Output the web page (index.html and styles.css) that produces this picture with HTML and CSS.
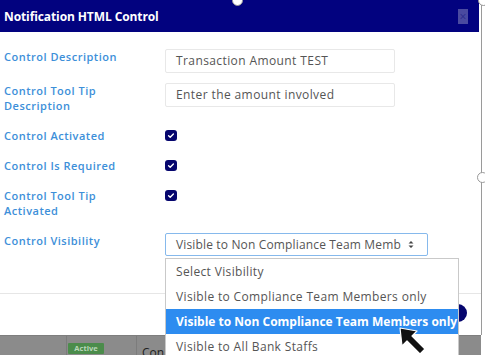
FILE: index.html
```html
<!DOCTYPE html>
<html lang="en">
<head>
  <meta charset="UTF-8">
  <title>Notification HTML Control</title>
  <link rel="stylesheet" href="styles.css">
</head>
<body>
  <div class="stage">
    <div class="modal">
      <!-- header -->
      <div class="modal-head">
        <span class="modal-title">Notification HTML Control</span>
        <span class="close">×</span>
      </div>

      <!-- form -->
      <div class="modal-body">
        <div class="row first">
          <label class="lbl">Control Description</label>
          <div class="field">Transaction Amount TEST</div>
        </div>
        <div class="row">
          <label class="lbl">Control Tool Tip<br>Description</label>
          <div class="field">Enter the amount involved</div>
        </div>
        <div class="row">
          <label class="lbl">Control Activated</label>
          <span class="check"><svg viewBox="0 0 12 11" width="12" height="11"><path d="M3.6 5.8 L5.2 7.2 L8.4 4" fill="none" stroke="#fff" stroke-width="1.4" stroke-linecap="round" stroke-linejoin="round"/></svg></span>
        </div>
        <div class="row">
          <label class="lbl">Control Is Required</label>
          <span class="check"><svg viewBox="0 0 12 11" width="12" height="11"><path d="M3.6 5.8 L5.2 7.2 L8.4 4" fill="none" stroke="#fff" stroke-width="1.4" stroke-linecap="round" stroke-linejoin="round"/></svg></span>
        </div>
        <div class="row">
          <label class="lbl">Control Tool Tip<br>Activated</label>
          <span class="check"><svg viewBox="0 0 12 11" width="12" height="11"><path d="M3.6 5.8 L5.2 7.2 L8.4 4" fill="none" stroke="#fff" stroke-width="1.4" stroke-linecap="round" stroke-linejoin="round"/></svg></span>
        </div>
        <div class="row">
          <label class="lbl">Control Visibility</label>
          <div class="select">
            <span class="select-text">Visible to Non Compliance Team Memb</span>
            <svg class="caret" viewBox="0 0 6 9" width="6" height="9"><path d="M0.5 3.5 L3 1 L5.5 3.5 Z M0.5 5.5 L3 8 L5.5 5.5 Z" fill="#444"/></svg>
          </div>
        </div>
      </div>

      <!-- footer -->
      <div class="modal-foot">
        <span class="round-btn"></span>
      </div>
    </div>

    <!-- page behind the overlay -->
    <div class="behind">
      <div class="cell c1"></div>
      <div class="cell c2"><span class="badge">Active</span></div>
      <div class="cell c3">Con</div>
    </div>

    <!-- open select list -->
    <ul class="options">
      <li>Select Visibility</li>
      <li>Visible to Compliance Team Members only</li>
      <li class="hl">Visible to Non Compliance Team Members only</li>
      <li>Visible to All Bank Staffs</li>
    </ul>

    <!-- resize handles -->
    <span class="handle h-top"></span>
    <span class="handle h-corner"></span>
    <span class="handle h-right"></span>

    <!-- mouse pointer -->
    <svg class="pointer" viewBox="0 0 32 30" width="32" height="30">
      <path d="M2 2 L4 20 L9 15 L22 28 L27 23 L14 10 L19 5 Z" fill="#111" stroke="#fff" stroke-width="1.2" stroke-linejoin="round"/>
    </svg>
  </div>
</body>
</html>
```

FILE: styles.css
```css
body { margin: 0; background: #fff; font-family: "Open Sans", "Liberation Sans", sans-serif; }
.stage { position: relative; width: 485px; height: 355px; overflow: hidden; background: #fff; }

.modal { width: 482px; height: 335px; border-right: 1px solid #9a9a9a; display: flex; flex-direction: column; box-sizing: border-box; }
.modal-head { height: 32px; width: 479px; background: #02027f; display: flex; align-items: center; justify-content: space-between; padding: 0 11px 0 4px; box-sizing: border-box; }
.modal-title { color: #fff; font-weight: 700; font-size: 12px; letter-spacing: -0.1px; }
.close { width: 10px; height: 15px; background: #4a4aa0; color: #2a2a8c; font-size: 12px; line-height: 15px; text-align: center; }

.modal-body { padding: 17px 0 0 4px; height: 262px; box-sizing: border-box; border-bottom: 1px solid #e6e6e6; }
.row { display: flex; align-items: flex-start; margin-bottom: 15px; }
.row.first { margin-bottom: 10px; }
.lbl { width: 161px; flex: none; color: #3d8fd9; font-size: 11px; font-weight: 600; line-height: 15px; letter-spacing: 0.5px; }

.field { width: 230px; height: 24px; box-sizing: border-box; border: 1px solid #e8e8e8; border-radius: 2px; padding: 0 10px; font-size: 12px; line-height: 22px; color: #555; letter-spacing: 0.4px; }
.check { width: 12px; height: 11px; margin-top: 2px; border-radius: 3px; background: #06066e; display: block; }
.check svg { display: block; }

.select { width: 263px; height: 23px; box-sizing: border-box; border: 1px solid #86b9ec; border-radius: 2px; padding: 0 10px; display: flex; align-items: center; gap: 7px; }
.select-text { font-size: 12px; color: #555; white-space: nowrap; letter-spacing: 0.15px; }
.caret { display: block; }

.modal-foot { flex: 1; display: flex; justify-content: flex-end; align-items: flex-start; padding: 10px 14px 0 0; }
.round-btn { width: 18px; height: 18px; border-radius: 50%; background: #06066e; }

.behind { display: flex; height: 20px; background: #8b8b8b; border-top: 1px solid #7e7e7e; width: 481px; }
.cell { border-right: 1px solid #7c7c7c; box-sizing: border-box; }
.c1 { width: 67px; }
.c2 { width: 70px; padding: 7px 0 0 1px; }
.c3 { flex: 1; border-right: 0; padding: 8px 0 0 5px; font-size: 12px; color: #222; }
.badge { display: block; width: 36px; height: 11px; background: #4b8c4b; color: #b9d6b9; font-size: 7.5px; font-weight: 700; line-height: 11px; text-align: center; border-radius: 1px; }

.options { position: absolute; left: 165px; top: 258px; width: 294px; margin: 0; padding: 0; list-style: none; background: #fff; border: 1px solid #c9c9c9; box-sizing: border-box; }
.options li { height: 25px; line-height: 25px; padding-left: 10px; font-size: 12px; color: #555; white-space: nowrap; letter-spacing: 0.35px; }
.options li.hl { background: #2d8cf0; color: #fff; font-weight: 700; letter-spacing: 0; }

.handle { position: absolute; width: 9px; height: 9px; border-radius: 50%; border: 1px solid #999; background: #fff; }
.h-top { left: 232px; top: -5px; }
.h-corner { left: 478px; top: -5px; }
.h-right { left: 477px; top: 172px; }

.pointer { position: absolute; left: 398px; top: 326px; }
```
